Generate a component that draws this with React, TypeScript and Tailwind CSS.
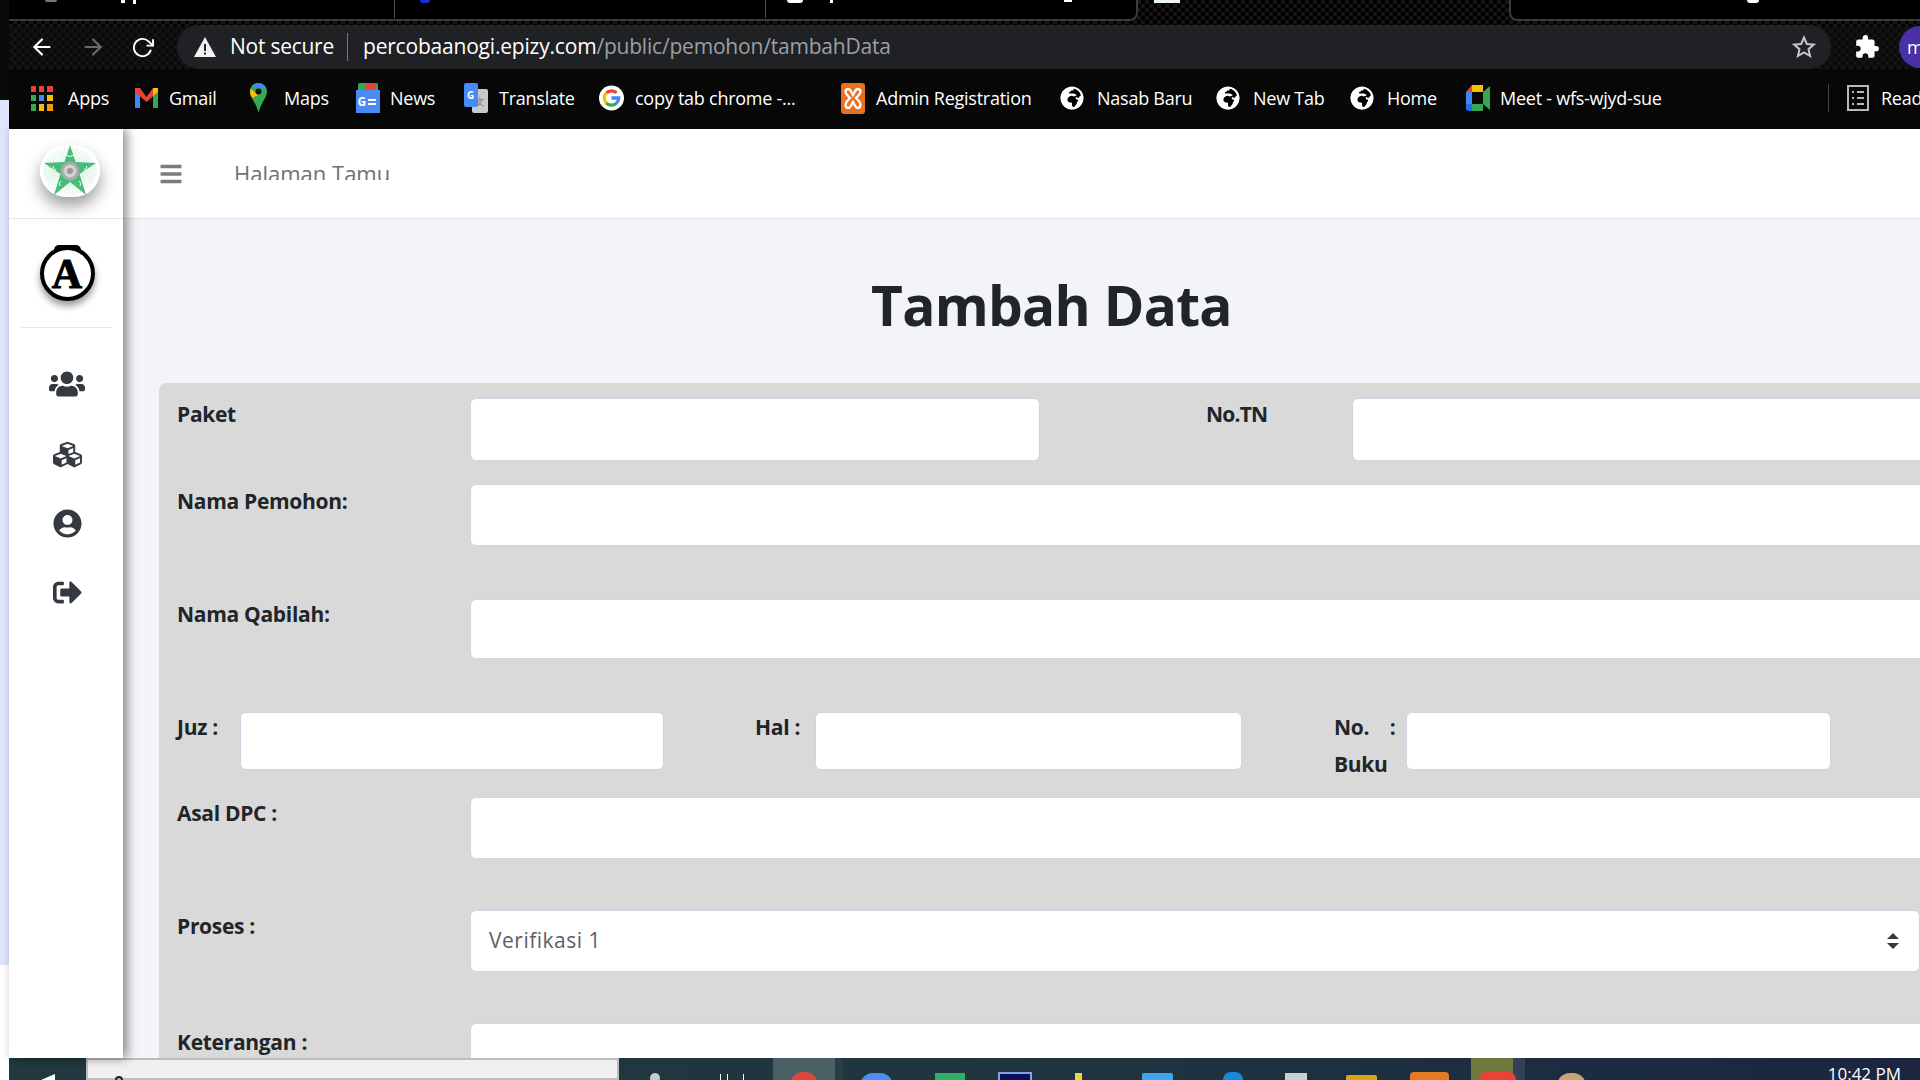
import type { ReactNode } from "react";
import { FaBars, FaCubes, FaGlobeAfrica, FaSignOutAlt, FaUserCircle, FaUsers } from "react-icons/fa";
import { FiArrowLeft, FiArrowRight, FiRotateCw } from "react-icons/fi";
import { MdExtension } from "react-icons/md";

const uiFont = "font-['Open_Sans','Noto_Sans',sans-serif]";

function AppsIcon() {
  const colors = ["#ea4335", "#ea4335", "#ea4335", "#34a853", "#4285f4", "#fbbc05", "#34a853", "#fbbc05", "#f29900"];
  return (
    <div className="grid h-[25px] w-[22px] grid-cols-3 gap-[3px]">
      {colors.map((c, i) => (
        <span key={i} className="block" style={{ background: c }} />
      ))}
    </div>
  );
}

function GmailIcon() {
  return (
    <svg width="23" height="22" viewBox="0 0 23 22">
      <path d="M0 4 L0 21 L5 21 L5 9 Z" fill="#4285f4" />
      <path d="M23 4 L23 21 L18 21 L18 9 Z" fill="#34a853" />
      <path d="M0 1 L5 1 L11.5 10 L18 1 L23 1 L23 5 L11.5 15 L0 5 Z" fill="#ea4335" />
      <path d="M18 1 L23 1 L23 5 L18 9 Z" fill="#fbbc05" />
    </svg>
  );
}

function MapsIcon() {
  return (
    <svg width="17" height="30" viewBox="0 0 17 30" className="-ml-[7px]">
      <path d="M8.5 0 C3.8 0 0 3.8 0 8.5 C0 15 6 19 8.5 30 C11 19 17 15 17 8.5 C17 3.8 13.2 0 8.5 0 Z" fill="#34a853" />
      <path d="M8.5 0 C6 0 3.6 1.1 2 3 L14 6 L16 5 C14.6 2 11.8 0 8.5 0 Z" fill="#4285f4" />
      <path d="M0.6 5.5 L8 12 L2.5 15 C1 13 0 11 0 8.5 Z" fill="#fbbc05" />
      <circle cx="8.5" cy="8.5" r="3" fill="#111" />
    </svg>
  );
}

function NewsIcon() {
  return (
    <div className="relative h-[30px] w-[24px]">
      <div className="absolute left-[2px] top-0 h-[10px] w-[20px] rounded-t-[2px] bg-[#34a853]" />
      <div className="absolute left-[10px] top-0 h-[8px] w-[10px] bg-[#ea4335]" />
      <div className="absolute left-0 top-[7px] flex h-[23px] w-[24px] items-center gap-[2px] bg-[#4a8af4] pl-[2px]">
        <span className="text-[12px] font-bold leading-none text-white">G</span>
        <span className="flex flex-col gap-[2px]">
          <span className="block h-[2px] w-[8px] bg-white" />
          <span className="block h-[2px] w-[8px] bg-white" />
        </span>
      </div>
    </div>
  );
}

function TranslateIcon() {
  return (
    <div className="relative h-[30px] w-[24px]">
      <div className="absolute bottom-0 right-0 flex h-[24px] w-[16px] items-center justify-center rounded-[2px] bg-[#c9c9c9] text-[10px] text-[#777]">
        文
      </div>
      <div className="absolute left-0 top-0 flex h-[24px] w-[14px] items-center justify-center rounded-[2px] bg-[#4a8af4] text-[10px] font-bold text-white">
        G
      </div>
    </div>
  );
}

function GoogleIcon() {
  return (
    <svg width="26" height="30" viewBox="0 0 26 26">
      <circle cx="13" cy="13" r="13" fill="#fff" />
      <path d="M7.7 7.7 A7.5 7.5 0 0 1 18.3 7.7" fill="none" stroke="#ea4335" strokeWidth="3.4" />
      <path d="M7.7 7.7 A7.5 7.5 0 0 0 7.7 18.3" fill="none" stroke="#fbbc05" strokeWidth="3.4" />
      <path d="M7.7 18.3 A7.5 7.5 0 0 0 18.3 18.3" fill="none" stroke="#34a853" strokeWidth="3.4" />
      <path d="M18.3 18.3 A7.5 7.5 0 0 0 20.5 13 L13 13" fill="none" stroke="#4285f4" strokeWidth="3.4" />
    </svg>
  );
}

function XamppIcon() {
  return (
    <svg width="24" height="31" viewBox="0 0 24 31">
      <rect width="24" height="31" y="0" rx="3" fill="#e8701f" />
      <path d="M5 7 C9 4 10 9 12 12 C14 9 15 4 19 7 C21 10 17 13 15 15 C17 17 21 20 19 24 C15 27 14 22 12 19 C10 22 9 27 5 24 C3 20 7 17 9 15 C7 13 3 10 5 7 Z" fill="none" stroke="#fff" strokeWidth="2.4" />
    </svg>
  );
}

function MeetIcon() {
  return (
    <svg width="24" height="26" viewBox="0 0 24 26">
      <path d="M6 0 L17 0 L17 7 L6 7 Z" fill="#fbbc05" />
      <path d="M6 0 L6 7 L0 7 Z" fill="#ea4335" />
      <path d="M0 7 L6 7 L6 19 L0 19 Z" fill="#4285f4" />
      <path d="M0 19 L6 19 L6 26 L3 26 C1 26 0 25 0 23 Z" fill="#1a73e8" />
      <path d="M6 19 L17 19 L17 26 L6 26 Z" fill="#34a853" />
      <path d="M17 7 L17 19 L24 25 L24 1 Z" fill="#34a853" />
      <path d="M6 7 H17 V19 H6 Z" fill="#0a0a0a" />
    </svg>
  );
}

function ReaderIcon() {
  return (
    <svg width="22" height="28" viewBox="0 0 22 28" fill="none">
      <rect x="1" y="2" width="20" height="24" stroke="#b8b8b8" strokeWidth="2" />
      <path d="M5 8 H7 M10 8 H17 M5 14 H7 M10 14 H17 M5 20 H7 M10 20 H17" stroke="#b8b8b8" strokeWidth="2" />
    </svg>
  );
}

const globe = <FaGlobeAfrica size={24} className="-ml-[3px] rounded-full bg-black text-white" />;

const bookmarks: { label: string; icon: ReactNode; width: string; gap: string }[] = [
  { label: "Apps", icon: <AppsIcon />, width: "w-[105px]", gap: "gap-[14px]" },
  { label: "Gmail", icon: <GmailIcon />, width: "w-[115px]", gap: "gap-[10px]" },
  { label: "Maps", icon: <MapsIcon />, width: "w-[106px]", gap: "gap-[10px]" },
  { label: "News", icon: <NewsIcon />, width: "w-[108px]", gap: "gap-[10px]" },
  { label: "Translate", icon: <TranslateIcon />, width: "w-[136px]", gap: "gap-[11px]" },
  { label: "copy tab chrome -...", icon: <GoogleIcon />, width: "w-[241px]", gap: "gap-[11px]" },
  { label: "Admin Registration", icon: <XamppIcon />, width: "w-[221px]", gap: "gap-[11px]" },
  { label: "Nasab Baru", icon: globe, width: "w-[156px]", gap: "gap-[11px]" },
  { label: "New Tab", icon: globe, width: "w-[134px]", gap: "gap-[11px]" },
  { label: "Home", icon: globe, width: "w-[114px]", gap: "gap-[11px]" },
  { label: "Meet - wfs-wjyd-sue", icon: <MeetIcon />, width: "w-[363px]", gap: "gap-[10px]" },
];

function BrowserChrome() {
  return (
    <div className={`h-[129px] shrink-0 bg-[#070707] text-white ${uiFont}`}>
      <div className="flex h-[25px] bg-[repeating-conic-gradient(#000_0_25%,#151515_0_50%)] bg-[length:8px_8px]">
        <div className="relative h-[21px] w-[1129px] rounded-br-[8px] border-b-2 border-r-2 border-[#3c3c3c] bg-black">
          <span className="absolute left-[385px] top-0 h-[18px] w-px bg-[#555]" />
          <span className="absolute left-[756px] top-0 h-[18px] w-px bg-[#555]" />
          <span className="absolute left-[36px] top-0 h-[2px] w-[12px] rounded-b-full bg-[#777]" />
          <span className="absolute left-[112px] top-0 h-[3px] w-[4px] bg-white" />
          <span className="absolute left-[124px] top-0 h-[4px] w-[3px] bg-white" />
          <span className="absolute left-[411px] top-0 h-[3px] w-[10px] rounded-b-full bg-[#1a2fd0]" />
          <span className="absolute left-[778px] top-0 h-[3px] w-[16px] rounded-b-full bg-white" />
          <span className="absolute left-[821px] top-0 h-[3px] w-[3px] bg-white" />
          <span className="absolute left-[1055px] top-0 h-[2px] w-[8px] bg-white" />
        </div>
        <div className="ml-[16px] h-[3px] w-[26px] bg-[#e8f4ea]" />
        <div className="relative ml-[329px] h-[21px] flex-1 rounded-bl-[8px] border-b-2 border-l-2 border-[#3c3c3c] bg-black">
          <span className="absolute left-[236px] top-0 h-[3px] w-[12px] rounded-b-full bg-white" />
        </div>
      </div>
      <div className="flex h-[44px] items-center bg-[repeating-conic-gradient(#0a0a0a_0_25%,#141414_0_50%)] bg-[length:8px_8px]">
        <FiArrowLeft size={26} className="ml-[20px] shrink-0 text-white" />
        <FiArrowRight size={26} className="ml-[25px] shrink-0 text-[#6a6a6a]" />
        <FiRotateCw size={23} className="ml-[25px] shrink-0 text-white" />
        <div className="ml-[23px] flex h-[44px] w-[1654px] shrink-0 items-center rounded-full bg-[#202124]">
          <svg width="22" height="20" viewBox="0 0 22 20" className="ml-[17px]">
            <path d="M11 0 L22 20 L0 20 Z" fill="#f1f1f1" />
            <path d="M10 7 H12 V14 H10 Z M10 15.5 H12 V17.5 H10 Z" fill="#202124" />
          </svg>
          <span className="ml-[14px] text-[21px] tracking-[-0.25px]">Not secure</span>
          <span className="ml-[13px] h-[28px] w-px bg-[#777]" />
          <span className="ml-[15px] text-[21px] tracking-[-0.2px]">
            percobaanogi.epizy.com<span className="text-[#9aa0a6]">/public/pemohon/tambahData</span>
          </span>
          <svg width="24" height="24" viewBox="0 0 24 24" className="ml-auto mr-[15px]" fill="none" stroke="#c4c7c5" strokeWidth="2">
            <path d="M12 2.5 L14.8 9 L21.8 9.6 L16.5 14.2 L18.1 21 L12 17.4 L5.9 21 L7.5 14.2 L2.2 9.6 L9.2 9 Z" />
          </svg>
        </div>
        <MdExtension size={26} className="ml-[23px] shrink-0 text-white" />
        <div className="ml-[19px] flex h-[42px] w-[42px] shrink-0 items-center rounded-full bg-[#4b2fa5] pl-[8px] text-[18px]">m</div>
      </div>
      <div className="flex h-[60px] items-center pb-[2px] pl-[20px] text-[18px] tracking-[-0.25px]">
        {bookmarks.map((b) => (
          <div key={b.label} className={`flex shrink-0 items-center ${b.width} ${b.gap}`}>
            <span className="flex w-[25px] shrink-0 justify-center">{b.icon}</span>
            <span className="whitespace-nowrap">{b.label}</span>
          </div>
        ))}
        <span className="h-[28px] w-px shrink-0 bg-[#444]" />
        <div className="ml-[18px] flex shrink-0 items-center gap-[12px]">
          <ReaderIcon />
          <span>Reading list</span>
        </div>
      </div>
    </div>
  );
}

function StarLogo() {
  const rays = Array.from({ length: 60 }, (_, i) => (i * Math.PI) / 30);
  return (
    <div className="rounded-full shadow-[0_9px_16px_rgba(0,0,0,0.38)]">
      <svg width="60" height="52" viewBox="0 0 60 52" className="block">
        <ellipse cx="30" cy="26" rx="30" ry="26" fill="#fff" />
        {rays.map((a, i) => (
          <line key={i} x1="30" y1="26" x2={30 + 27 * Math.cos(a)} y2={26 + 23 * Math.sin(a)} stroke="#bfeacf" strokeWidth="0.6" />
        ))}
        <path d="M30 0 L35.5 17 L56 18 L39.5 29 L46 50 L30 37 L14 50 L20.5 29 L4 18 L24.5 17 Z" fill="#45bd78" />
        <path d="M26 10 Q30 13 34 10" fill="none" stroke="#fff" strokeWidth="1" />
        <path d="M13 21 Q13 24 16 25 M47 21 Q47 24 44 25 M20 41 Q18 38 21 36 M40 41 Q42 38 39 36" fill="none" stroke="#fff" strokeWidth="1" />
        <circle cx="30" cy="26" r="9.5" fill="#a9a9a9" />
        <circle cx="30" cy="26" r="6.5" fill="#d2d2d2" />
        <circle cx="30" cy="26" r="3" fill="#989898" />
      </svg>
    </div>
  );
}

function Sidebar() {
  return (
    <aside className="relative z-10 flex w-[114px] shrink-0 flex-col items-center bg-white shadow-[4px_0_10px_rgba(0,0,0,0.45)]">
      <div className="flex h-[90px] w-full items-center justify-center border-b border-[#e3e6f0] pb-[6px] pr-[1px] pl-[9px]">
        <StarLogo />
      </div>
      <div className="relative mt-[27px] flex h-[55px] w-[55px] translate-x-[1px] items-center justify-center rounded-full border-[4px] border-black bg-white font-['Liberation_Serif',serif] text-[42px] font-bold leading-none text-black shadow-[0_5px_7px_rgba(0,0,0,0.4)] [-webkit-text-stroke:1px_black]">
        <span className="absolute left-[10px] top-[-5px] h-[5px] w-[27px] rounded-t-[6px] bg-black" />
        A
      </div>
      <div className="mt-[26px] h-px w-[90px] bg-[#e3e6f0]" />
      <div className="flex translate-x-[1px] flex-col items-center text-[#343a40]">
        <FaUsers size={36} className="mt-[38px]" />
        <FaCubes size={29} className="mt-[38px]" />
        <FaUserCircle size={29} className="mt-[40px]" />
        <FaSignOutAlt size={29} className="mt-[40px]" />
      </div>
    </aside>
  );
}

function Field({ className }: { className: string }) {
  return <div className={`shrink-0 rounded-[6px] border border-[#d1d3e2] bg-white ${className}`} />;
}

function Label({ children, className = "" }: { children: ReactNode; className?: string }) {
  return <div className={`shrink-0 whitespace-nowrap text-[21px] font-bold tracking-[-0.3px] text-[#212529] ${className}`}>{children}</div>;
}

function FormCard() {
  return (
    <div className={`h-[700px] w-[1800px] shrink-0 rounded-[8px] bg-[#d9d9d9] pt-[15px] pl-[18px] ${uiFont}`}>
      <div className="flex">
        <Label className="w-[293px] pt-[1px]">Paket</Label>
        <Field className="h-[63px] w-[570px]" />
        <Label className="ml-[166px] w-[146px] pt-[1px] tracking-[-0.8px]">No.TN</Label>
        <Field className="h-[63px] w-[600px]" />
      </div>
      <div className="mt-[23px] flex">
        <Label className="w-[293px] pt-[2px]">Nama Pemohon:</Label>
        <Field className="h-[62px] w-[1481px]" />
      </div>
      <div className="mt-[53px] flex">
        <Label className="w-[293px]">Nama Qabilah:</Label>
        <Field className="h-[60px] w-[1481px]" />
      </div>
      <div className="mt-[53px] flex h-[58px]">
        <Label className="w-[63px]">Juz :</Label>
        <Field className="h-[58px] w-[424px]" />
        <Label className="ml-[91px] w-[60px]">Hal :</Label>
        <Field className="h-[58px] w-[427px]" />
        <div className="ml-[92px] w-[72px] shrink-0">
          <Label>No.&nbsp;&nbsp;&nbsp;&nbsp;:</Label>
          <Label className="pt-[5px] text-[20px]">Buku</Label>
        </div>
        <Field className="h-[58px] w-[425px]" />
      </div>
      <div className="mt-[27px] flex">
        <Label className="w-[293px] pt-[1px]">Asal DPC :</Label>
        <Field className="h-[62px] w-[1481px]" />
      </div>
      <div className="mt-[51px] flex">
        <Label className="w-[293px] pt-[1px]">Proses :</Label>
        <div className="relative flex h-[62px] w-[1450px] shrink-0 items-center rounded-[6px] border border-[#d1d3e2] bg-white pl-[18px] text-[21px] tracking-[0.5px] text-[#5c5e6b]">
          Verifikasi 1
          <svg width="12" height="16" viewBox="0 0 12 16" className="absolute right-[20px] top-[22px]">
            <path d="M6 0 L12 6 H0 Z M6 16 L0 10 H12 Z" fill="#343a40" />
          </svg>
        </div>
      </div>
      <div className="mt-[51px] flex">
        <Label className="w-[293px] pt-[4px]">Keterangan :</Label>
        <Field className="h-[120px] w-[1481px]" />
      </div>
    </div>
  );
}

function MainPanel() {
  return (
    <main className="flex min-w-0 flex-1 flex-col overflow-hidden bg-[#f3f4f8]">
      <header className={`flex h-[90px] shrink-0 items-center border-b border-[#e3e6f0] bg-white pl-[36px] ${uiFont}`}>
        <FaBars size={24} className="text-[#7c7c7c]" />
        <div className="ml-[51px] mb-[4px] h-[17px] overflow-hidden text-[22px] leading-[21px] text-[#6e707e]">Halaman Tamu</div>
      </header>
      <h1 className={`mt-[44px] h-[120px] shrink-0 pl-[748px] text-[55px] font-bold leading-[84px] tracking-[-0.7px] text-[#212529] ${uiFont}`}>
        Tambah Data
      </h1>
      <div className="ml-[36px] min-h-0 flex-1">
        <FormCard />
      </div>
    </main>
  );
}

function Taskbar() {
  return (
    <div className="flex h-[22px] shrink-0 overflow-hidden bg-gradient-to-r from-[#21383f] via-[#20363f] to-[#1b2540] text-white">
      <div className="flex w-[77px] shrink-0 items-end pl-[32px]">
        <span className="h-[6px] w-[14px] bg-white [clip-path:polygon(100%_0,100%_100%,0_100%)]" />
      </div>
      <div className="w-[533px] shrink-0 border-2 border-[#bdbdbd] bg-[#f0f0f0] pl-[27px] pt-[16px]">
        <span className="block h-[8px] w-[8px] rounded-full border-2 border-[#222]" />
      </div>
      <div className="relative w-[154px] shrink-0">
        <span className="absolute left-[31px] top-[15px] h-[10px] w-[10px] rounded-full bg-[#c8ccd0]" />
        <span className="absolute left-[101px] top-[16px] h-[8px] w-px bg-white" />
        <span className="absolute left-[108px] top-[16px] h-[8px] w-px bg-white" />
        <span className="absolute left-[124px] top-[16px] h-[8px] w-px bg-white" />
      </div>
      <div className="w-[62px] shrink-0 bg-[#4b5e66] pl-[17px] pt-[14px]">
        <span className="block h-[26px] w-[28px] rounded-full bg-[#d9483b]" />
      </div>
      <span className="w-[8px] shrink-0 bg-[#2a3c44]" />
      <span className="ml-[17px] mt-[15px] h-[26px] w-[33px] shrink-0 rounded-full bg-[#4e8ef7]" />
      <span className="ml-[42px] mt-[15px] h-[26px] w-[30px] shrink-0 bg-[#2fae66]" />
      <span className="ml-[33px] mt-[14px] h-[26px] w-[34px] shrink-0 border-2 border-[#7aa7dc] bg-[#0c0c5a]" />
      <span className="ml-[43px] mt-[15px] h-[26px] w-[7px] shrink-0 bg-[#e8d93a]" />
      <span className="ml-[60px] mt-[15px] h-[26px] w-[31px] shrink-0 rounded-[2px] bg-[#3fa5ee]" />
      <span className="ml-[50px] mt-[14px] h-[26px] w-[20px] shrink-0 rounded-t-[8px] bg-[#1e88d8]" />
      <span className="ml-[42px] mt-[15px] h-[26px] w-[22px] shrink-0 bg-[#c8d0d4]" />
      <span className="ml-[39px] mt-[17px] h-[26px] w-[31px] shrink-0 rounded-[2px] bg-[#d9a514]" />
      <span className="ml-[33px] mt-[14px] h-[26px] w-[39px] shrink-0 rounded-[4px] bg-[#e37a24]" />
      <div className="ml-[22px] w-[42px] shrink-0 bg-[#6f7a3f] pl-[8px] pt-[14px]">
        <span className="relative block h-[26px] w-[37px] rounded-[8px] bg-[#ea4335]" />
      </div>
      <span className="w-[12px] shrink-0 bg-[#334058]" />
      <span className="ml-[32px] mt-[15px] h-[26px] w-[29px] shrink-0 rounded-full bg-[#c9a477]" />
      <span className={`ml-auto mr-[19px] mt-[4px] whitespace-nowrap text-[17px] leading-[24px] ${uiFont}`}>10:42 PM</span>
    </div>
  );
}

export default function App() {
  return (
    <div className="flex h-[1080px] w-[1920px] overflow-hidden bg-white">
      <div className="flex w-[9px] shrink-0 flex-col">
        <div className="h-[100px] bg-[#0a0a0a]" />
        <div className="h-[865px] bg-[#dfe5fd]" />
      </div>
      <div className="flex min-w-0 flex-1 flex-col">
        <BrowserChrome />
        <div className="flex min-h-0 flex-1">
          <Sidebar />
          <MainPanel />
        </div>
        <Taskbar />
      </div>
    </div>
  );
}
